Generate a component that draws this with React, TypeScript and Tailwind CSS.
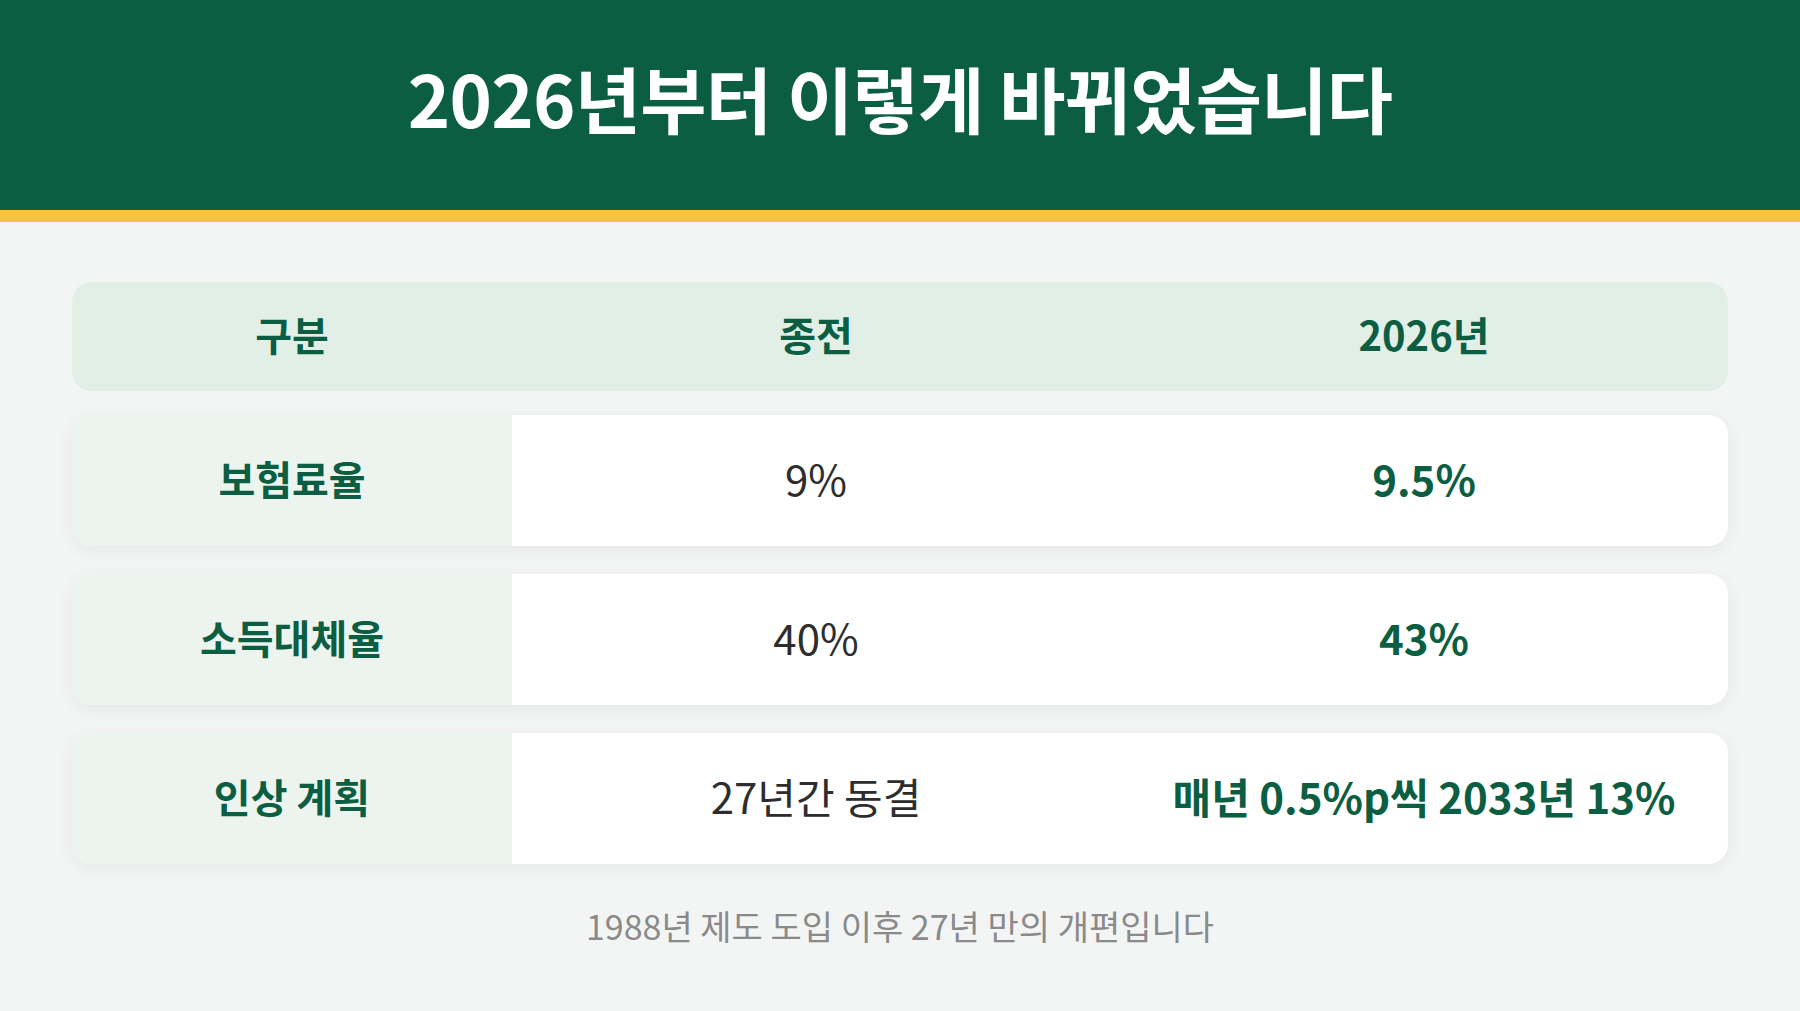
import React from 'react';

type Row = { label: string; before: string; after: string };

const rows: Row[] = [
  { label: '보험료율', before: '9%', after: '9.5%' },
  { label: '소득대체율', before: '40%', after: '43%' },
  { label: '인상 계획', before: '27년간 동결', after: '매년 0.5%p씩 2033년 13%' },
];

const App: React.FC = () => {
  return (
    <div className="min-h-screen w-full bg-[#f3f5f4] font-['Noto_Sans_CJK_KR',sans-serif]">
      <header className="h-[222px] bg-[#0c5e42] border-b-[12px] border-[#f5c542] flex items-center justify-center pb-[16px]">
        <h1 className="text-[72px] font-bold text-white tracking-[-0.01em] leading-none">
          2026년부터 이렇게 바뀌었습니다
        </h1>
      </header>

      <main className="px-[72px] pt-[60px]">
        <div className="grid grid-cols-[440px_1fr_1fr] h-[109px] items-center pb-[6px] rounded-[20px] bg-[#e2efe6] text-[40px] font-bold text-[#0c5e42]">
          <div className="text-center">구분</div>
          <div className="text-center">종전</div>
          <div className="text-center">2026년</div>
        </div>

        <div className="mt-[24px] flex flex-col gap-[28px]">
          {rows.map((row) => (
            <div
              key={row.label}
              className="grid grid-cols-[440px_1fr_1fr] h-[131px] rounded-[20px] overflow-hidden bg-white shadow-[0_4px_18px_rgba(0,0,0,0.06)]"
            >
              <div className="flex items-center justify-center pb-[6px] bg-[#edf4ef] text-[40px] font-bold text-[#0c5e42]">
                {row.label}
              </div>
              <div className="flex items-center justify-center pb-[6px] text-[42px] text-[#2d2d2d]">{row.before}</div>
              <div className="flex items-center justify-center pb-[6px] text-[42px] font-bold text-[#0c5e42]">
                {row.after}
              </div>
            </div>
          ))}
        </div>

        <p className="mt-[36px] text-center text-[34px] text-[#8a8a8a]">
          1988년 제도 도입 이후 27년 만의 개편입니다
        </p>
      </main>
    </div>
  );
};

export default App;
